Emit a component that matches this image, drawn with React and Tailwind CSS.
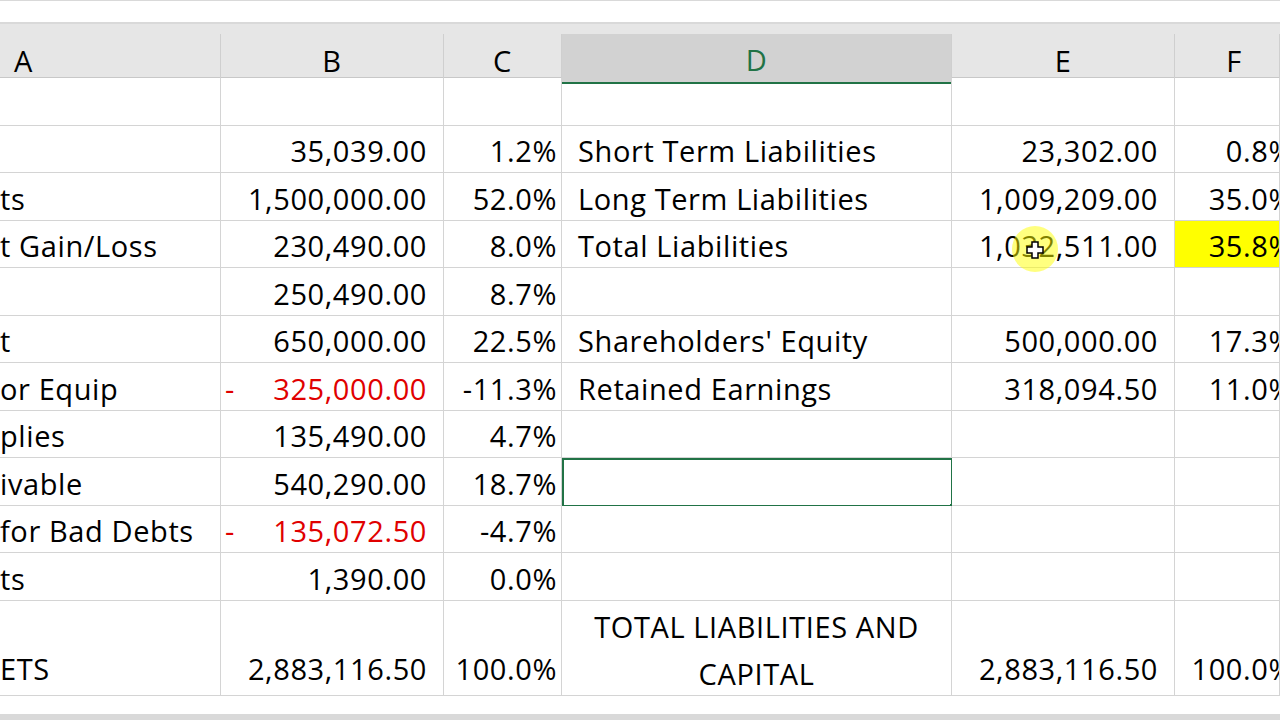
export default function App() {
  const rows = [
    ["", "", "", "", "", ""],
    ["", "35,039.00", "1.2%", "Short Term Liabilities", "23,302.00", "0.8%"],
    ["ts", "1,500,000.00", "52.0%", "Long Term Liabilities", "1,009,209.00", "35.0%"],
    ["t Gain/Loss", "230,490.00", "8.0%", "Total Liabilities", "1,032,511.00", "35.8%"],
    ["", "250,490.00", "8.7%", "", "", ""],
    ["t", "650,000.00", "22.5%", "Shareholders' Equity", "500,000.00", "17.3%"],
    ["or Equip", "-325,000.00", "-11.3%", "Retained Earnings", "318,094.50", "11.0%"],
    ["plies", "135,490.00", "4.7%", "", "", ""],
    ["ivable", "540,290.00", "18.7%", "", "", ""],
    ["for Bad Debts", "-135,072.50", "-4.7%", "", "", ""],
    ["ts", "1,390.00", "0.0%", "", "", ""],
  ];
  const cols = "grid-cols-[221px_223px_118px_390px_223px_105px]";
  const cell = "border-r border-b border-[#d4d4d4] flex items-center overflow-hidden whitespace-nowrap pt-[4px]";
  return (
    <div className="w-[1280px] h-[720px] bg-white overflow-hidden relative text-black text-[29px] tracking-[0.6px]" style={{ fontFamily: '"Open Sans", sans-serif' }}>
      <div className="h-[24px] border-t border-b-2 border-[#d9d9d9]" />
      <div className={`grid ${cols} h-[54px] bg-[#e6e6e6] border-b border-[#c8c8c8]`}>
        {["A", "B", "C", "D", "E", "F"].map((h, i) => (
          <div key={h} className="flex flex-col">
            <div className="h-[10px]" />
            <div className={`flex-1 flex items-center pt-[4px] border-r border-[#cfcfcf] ${i === 0 ? "justify-start pl-[14px]" : "justify-center"} ${i === 3 ? "bg-[#d2d2d2] border-b-2 border-b-[#217346] text-[#217346]" : ""} ${i === 5 ? "pl-[14px]" : ""}`}>{h}</div>
          </div>
        ))}
      </div>
      <div className={`grid ${cols} auto-rows-[47.5px]`}>
        {rows.map((r, ri) =>
          r.map((v, ci) => {
            const red = v.startsWith("-") && ci === 1;
            const sel = ri === 8 && ci === 3;
            return (
              <div key={ri + "-" + ci} className={`${cell} ${ci === 0 || ci === 3 ? "justify-start" : "justify-end"} ${ci === 3 ? "pl-[16px]" : ""} ${ci === 1 || ci === 4 ? "pr-[16px]" : ""} ${ci === 2 ? "pr-[4px]" : ""} ${ri === 3 && ci === 5 ? "bg-[#ffff00]" : ""} ${sel ? "border-2 !border-[#217346] relative" : ""}`}>
                {red ? (
                  <div className="flex w-full justify-between pl-[4px] text-[#e00000]"><span>-</span><span>{v.slice(1)}</span></div>
                ) : ci === 5 && v ? (
                  <span className="shrink-0 -mr-[14px]">{v}</span>
                ) : (
                  v
                )}
                {sel && <div className="absolute -right-[4px] -bottom-[4px] w-[6px] h-[6px] bg-[#217346] border border-white" />}
              </div>
            );
          })
        )}
        <div className={`${cell} h-[95px] items-end pb-[4px]`}>ETS</div>
        <div className={`${cell} h-[95px] items-end justify-end pr-[16px] pb-[4px]`}>2,883,116.50</div>
        <div className={`${cell} h-[95px] items-end justify-end pr-[4px] pb-[4px]`}>100.0%</div>
        <div className={`${cell} h-[95px] justify-center text-center whitespace-normal leading-[47px]`}>TOTAL LIABILITIES AND<br />CAPITAL</div>
        <div className={`${cell} h-[95px] items-end justify-end pr-[16px] pb-[4px]`}>2,883,116.50</div>
        <div className={`${cell} h-[95px] items-end justify-end pb-[4px]`}><span className="shrink-0 -mr-[14px]">100.0%</span></div>
      </div>
      <div className="absolute left-[1012px] top-[226px] w-[46px] h-[46px] rounded-full bg-[#ffff00]/50" />
      <svg className="absolute left-[1026px] top-[241px]" width="18" height="18" viewBox="0 0 18 18">
        <path d="M6 1h6v5h5v6h-5v5H6v-5H1V6h5z" fill="white" stroke="black" strokeWidth="1.5" />
      </svg>
      <div className="absolute left-0 bottom-0 w-full h-[6px] bg-[#d9d9d9]" />
    </div>
  );
}
